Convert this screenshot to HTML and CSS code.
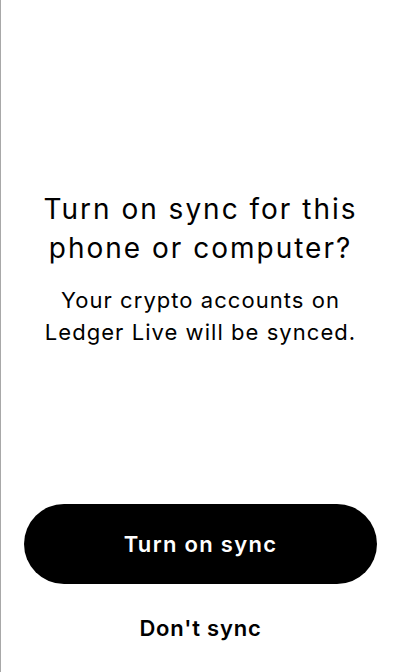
FILE: index.html
```html
<!DOCTYPE html>
<html lang="en">
<head>
<meta charset="utf-8">
<link rel="stylesheet" href="styles.css">
</head>
<body>
<div class="screen">
  <div class="content">
    <h1 class="title">Turn on sync for this phone or computer?</h1>
    <p class="subtitle">Your crypto accounts on Ledger Live will be synced.</p>
  </div>
  <div class="actions">
    <button class="btn-primary">Turn on sync</button>
    <button class="btn-text">Don't sync</button>
  </div>
</div>
</body>
</html>
```

FILE: styles.css
```css
* { box-sizing: border-box; }
html, body { margin: 0; padding: 0; background: #fff; }
body { font-family: Inter, "Noto Sans", sans-serif; color: #000; }
.screen {
  width: 400px;
  height: 672px;
  border-left: 1px solid #a8a8a8;
  display: flex;
  flex-direction: column;
}
.content {
  flex: 1;
  display: flex;
  flex-direction: column;
  justify-content: center;
  align-items: center;
  padding: 34px 40px 0;
  text-align: center;
}
.title {
  margin: 0;
  font-size: 28px;
  font-weight: 400;
  line-height: 39px;
  letter-spacing: 2px;
}
.subtitle {
  margin: 16px 0 0;
  font-size: 22px;
  font-weight: 400;
  line-height: 32px;
  letter-spacing: 1.05px;
}
.actions {
  display: flex;
  flex-direction: column;
  align-items: stretch;
  padding: 0 23px 0;
}
.btn-primary {
  height: 80px;
  border: none;
  border-radius: 40px;
  background: #000;
  color: #fff;
  font-family: inherit;
  font-size: 22px;
  font-weight: 600;
  letter-spacing: 1.3px;
}
.btn-text {
  height: 88px;
  border: none;
  background: transparent;
  color: #000;
  font-family: inherit;
  font-size: 22px;
  font-weight: 600;
  letter-spacing: 0.8px;
}
```
